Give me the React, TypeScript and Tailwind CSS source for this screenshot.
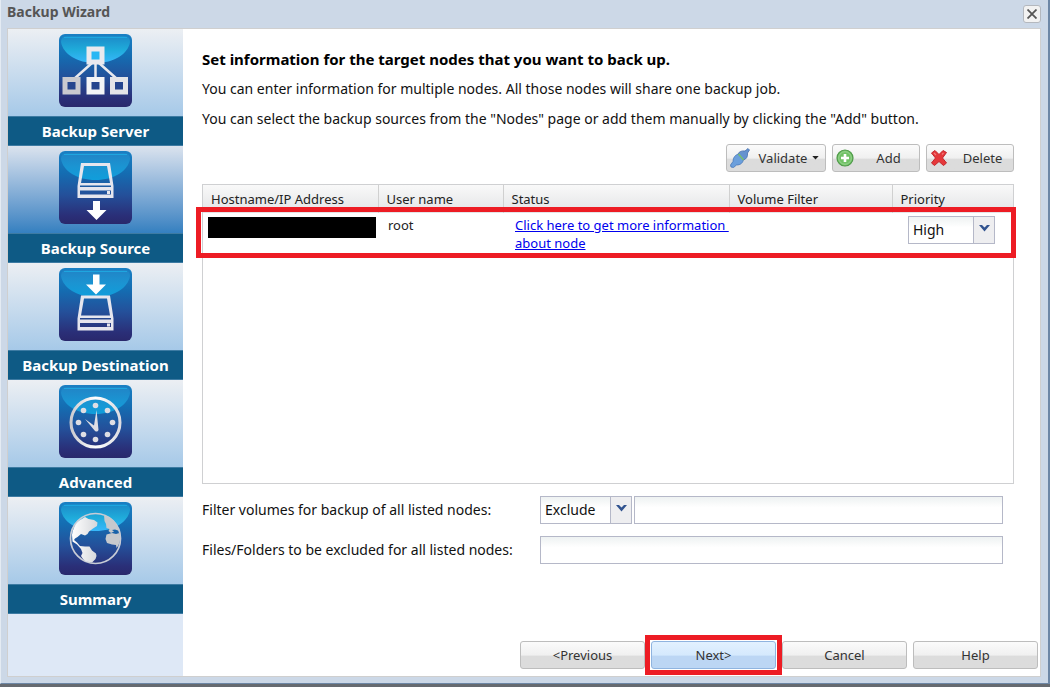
import React from 'react'

interface IStep {
  title: string
  active?: boolean
  icon: React.ReactNode
}

const Tile: React.FC<{ bright?: boolean; children: React.ReactNode }> = ({
  bright,
  children,
}) => (
  <svg viewBox="0 0 73 73" className="size-[73px]" aria-hidden="true">
    <defs>
      <linearGradient id="tile" x1="0" y1="0" x2="0" y2="1">
        <stop offset="0" stopColor="#1a80c4" />
        <stop offset="0.3" stopColor="#146db2" />
        <stop offset="0.6" stopColor="#24509a" />
        <stop offset="0.88" stopColor="#2a2f78" />
        <stop offset="1" stopColor="#29286c" />
      </linearGradient>
      <linearGradient id="gloss" x1="0" y1="0" x2="0" y2="1">
        <stop offset="0" stopColor="#2184c6" />
        <stop offset="0.5" stopColor="#1b94d2" />
        <stop offset="1" stopColor="#109edb" />
      </linearGradient>
      <linearGradient id="brightGloss" x1="0" y1="0" x2="0" y2="1">
        <stop offset="0" stopColor="#1c8ac8" />
        <stop offset="0.5" stopColor="#1fabda" />
        <stop offset="1" stopColor="#38b8fb" />
      </linearGradient>
      <linearGradient id="metal" x1="0" y1="0" x2="1" y2="0">
        <stop offset="0" stopColor="#cbcbd0" />
        <stop offset="0.5" stopColor="#ffffff" />
        <stop offset="1" stopColor="#dcdce2" />
      </linearGradient>
      <linearGradient id="land" x1="0" y1="0" x2="1" y2="0">
        <stop offset="0" stopColor="#ffffff" />
        <stop offset="1" stopColor="#d5d7db" />
      </linearGradient>
    </defs>
    <rect width="73" height="73" rx="6" fill="url(#tile)" />
    <path
      d="M2 8Q2 2 8 2H65Q71 2 71 8C69 20 55 29 36.500 29S4 20 2 8Z"
      fill={bright ? 'url(#brightGloss)' : 'url(#gloss)'}
    />
    <path d="M5 3.500H68" stroke="#1ea6e0" strokeWidth="1" />
    {children}
  </svg>
)

const Drive: React.FC = () => (
  <g>
    <path
      fillRule="evenodd"
      d="M22 12H51L54.500 35V47H18.500V35ZM25 15L22 32H51L48 15ZM21 34.500V36H52V34.500ZM21 39.500V43.500H52V39.500Z"
      fill="#e6e6ee"
    />
    <rect x="48" y="40" width="3" height="3" fill="#e6e6ee" />
  </g>
)

const ServerIcon: React.FC = () => (
  <Tile bright>
    <g fill="none" stroke="#e9e9ee">
      <path d="M33 29L15 45M36.500 29V45M40 29L58 45" strokeWidth="2.500" />
      <g strokeWidth="5">
        <rect x="30" y="15" width="13" height="13" fill="#28b7f4" />
        <rect x="6" y="45.500" width="13" height="12.500" fill="#25458e" stroke="#c9c9cf" />
        <rect x="30" y="45.500" width="13" height="12.500" fill="#25458e" stroke="#f4f4f6" />
        <rect x="53.500" y="45.500" width="13" height="12.500" fill="#25458e" stroke="#e4e4e8" />
      </g>
    </g>
  </Tile>
)

const SourceIcon: React.FC = () => (
  <Tile>
    <Drive />
    <path d="M34 50H41V59H47.500L37.500 69L27.500 59H34Z" fill="#fff" />
  </Tile>
)

const DestinationIcon: React.FC = () => (
  <Tile>
    <path d="M34 6.500H40.500V16.500H47L37 26.500L27 16.500H34Z" fill="#fff" />
    <g transform="translate(0 15.500)">
      <Drive />
    </g>
  </Tile>
)

const ClockIcon: React.FC = () => (
  <Tile>
    <circle cx="36.500" cy="37.500" r="24.500" fill="none" stroke="url(#metal)" strokeWidth="3" />
    <g fill="#dedee4">
      <circle cx="36.500" cy="20.500" r="2.800" />
      <circle cx="48.500" cy="25.500" r="2.800" />
      <circle cx="53.500" cy="37.500" r="2.800" />
      <circle cx="48.500" cy="49.500" r="2.800" />
      <circle cx="36.500" cy="54.500" r="2.800" />
      <circle cx="24.500" cy="49.500" r="2.800" />
      <circle cx="19.500" cy="37.500" r="2.800" />
      <circle cx="24.500" cy="25.500" r="2.800" />
      <path d="M37.500 25L39.500 45Q38.500 47.500 36 46L26 34L35 40.500Z" />
    </g>
  </Tile>
)

const GlobeIcon: React.FC = () => (
  <Tile bright>
    <circle cx="36.500" cy="36.500" r="25" fill="none" stroke="#c8ccd6" strokeWidth="1.700" />
    <path
      d="M13 33C14 26 17 21 20.500 18.500L26 15L29.500 17L35 18L38.500 20.500L38 24L34 26.500L30 29.500L28.500 32L26 33.500L22 32L18.500 35L16 36.500L15 38L18 40.500L21 44L26 44.500L30.500 44.500L33 48.500L37 51.500L37.500 54L36.500 57L33 60.500L27 59.500L24 57L22 54L23.500 51L22 47L18 42.500L13.500 39.500Z"
      fill="url(#land)"
    />
    <path
      d="M45 13C52 15 57.500 20 60.500 29L56 27.500L53 28L55 29.500L52 31L49.500 29L50.500 27L47.500 26L47 22L45.500 19ZM47.500 32.500L53 31L57 32L60.500 31C62 36 61 42 57.500 46L57 43L53 42.500L48 41L46.500 37Z"
      fill="#c7c9cd"
    />
  </Tile>
)

const steps: IStep[] = [
  { title: 'Backup Server', icon: <ServerIcon /> },
  { title: 'Backup Source', icon: <SourceIcon />, active: true },
  { title: 'Backup Destination', icon: <DestinationIcon /> },
  { title: 'Advanced', icon: <ClockIcon /> },
  { title: 'Summary', icon: <GlobeIcon /> },
]

const Step: React.FC<IStep> = ({ title, active, icon }) => (
  <li>
    <button type="button" className="block w-full">
      <span
        className={`flex h-[87px] justify-center bg-linear-to-b pt-[5px] ${
          active ? 'from-[#dbe3ee] to-[#3480c0]' : 'from-[#eceff3] to-[#a6c9e8]'
        }`}
      >
        {icon}
      </span>
      <span className="block h-[30px] border-y border-[#3d7ba3] bg-[#0e5a85] text-[15px] leading-7 font-bold text-white">
        {title}
      </span>
    </button>
  </li>
)

const ValidateIcon: React.FC = () => (
  <svg viewBox="0 0 20 20" className="size-5 shrink-0" aria-hidden="true">
    <path
      d="M1 19L0.500 17L3 13.500C3 9.500 5 7 8.500 6L13.500 11C13 15 10.500 17 6.500 17L3.500 19.500Z"
      fill="#6b9fdc"
      stroke="#4a78b8"
      strokeWidth="0.800"
    />
    <path
      d="M8 6C9 3.500 12 2.500 15 3L18 0.500L19.500 2L17.500 5C18 8.500 16.500 11 13.500 12Z"
      fill="#6592cf"
      stroke="#456fae"
      strokeWidth="0.800"
    />
    <path d="M8.500 6L13.500 12" stroke="#7ac16c" strokeWidth="1.400" />
  </svg>
)

const AddIcon: React.FC = () => (
  <svg viewBox="0 0 18 18" className="size-[18px] shrink-0" aria-hidden="true">
    <circle cx="9" cy="9" r="8" fill="#72c267" stroke="#4f9a49" strokeWidth="1.200" />
    <circle cx="9" cy="9" r="6.300" fill="none" stroke="#a2d99a" strokeWidth="0.800" />
    <path d="M9 5V13M5 9H13" stroke="#fff" strokeWidth="2.600" />
  </svg>
)

const DeleteIcon: React.FC = () => (
  <svg viewBox="0 0 18 18" className="size-[18px] shrink-0" aria-hidden="true">
    <path
      d="M1.500 4L5 1.500L9 5.500L13 1.500L16.500 3.500L12.500 9L16.500 14L13.500 16.500L9 12.500L4.500 16.500L1.500 14L5.500 9Z"
      fill="#e5383b"
      stroke="#c4262b"
      strokeLinejoin="round"
    />
    <path d="M4 4L6 6M13.500 4L12 5.500" stroke="#f27a7a" strokeWidth="1.200" />
  </svg>
)

const buttonLook =
  'flex h-7 items-center rounded-[3px] border border-[#bdbdbd] bg-linear-to-b from-[#fbfbfb] from-0% via-[#f0f0f0] via-50% to-[#dcdcdc] to-55% text-[13px] text-[#333]'

const ToolButton: React.FC<{
  label: string
  icon: React.ReactNode
  menu?: boolean
}> = ({ label, icon, menu }) => (
  <button
    type="button"
    className={`${buttonLook} ${menu ? 'w-[100px]' : 'w-[88px]'} pl-[3px]`}
  >
    {icon}
    <span className="flex-1 pl-1 text-center">{label}</span>
    {menu ? (
      <svg viewBox="0 0 8 5" className="mr-1.5 h-1 w-[7px]" aria-hidden="true">
        <path d="M0 0H8L4 4.500Z" fill="#222" />
      </svg>
    ) : null}
  </button>
)

const Dropdown: React.FC<{
  label: string
  options: string[]
  width: string
}> = ({ label, options, width }) => (
  <div className={`relative h-7 shrink-0 ${width}`}>
    <select
      aria-label={label}
      className="h-full w-full appearance-none border border-[#b5b8c8] bg-linear-to-b from-[#eef2f2] to-white to-40% pl-1 text-sm text-[#111]"
    >
      {options.map((option) => (
        <option key={option}>{option}</option>
      ))}
    </select>
    <span className="pointer-events-none absolute inset-y-0 right-0 flex w-[22px] items-center justify-center border border-[#b5b8c8] bg-[#eeeef0]">
      <svg viewBox="0 0 11 7" className="mb-1 h-[7px] w-[11px]" aria-hidden="true">
        <path d="M0 0H3L5.500 2.500L8 0H11L5.500 6.500Z" fill="#31538f" />
      </svg>
    </span>
  </div>
)

const headCell = 'h-7 px-2 text-left font-normal'

const NodeTable: React.FC = () => (
  <div className="relative mt-3 min-h-[300px] flex-1 border border-[#cfd0d2]">
    <table className="w-full table-fixed border-collapse text-[13px] text-[#222]">
      <colgroup>
        <col className="w-[175px]" />
        <col className="w-[125px]" />
        <col />
        <col className="w-[163px]" />
        <col className="w-[121px]" />
      </colgroup>
      <thead className="bg-linear-to-b from-[#f9f9f9] to-[#e3e4e6]">
        <tr className="divide-x divide-[#d0d0d0]">
          <th className={headCell}>Hostname/IP Address</th>
          <th className={headCell}>User name</th>
          <th className={headCell}>Status</th>
          <th className={headCell}>Volume Filter</th>
          <th className={headCell}>Priority</th>
        </tr>
      </thead>
      <tbody>
        <tr className="align-top">
          <td className="pt-1 pr-0.5 pl-[5px]">
            <div className="h-[21px] bg-black" />
          </td>
          <td className="pt-[3px] pl-2.5 leading-[18px]">root</td>
          <td className="pt-[3px] pl-3 leading-[18px]">
            <a href="#node" className="whitespace-nowrap text-[#0000ee] underline">
              Click here to get more information&nbsp;
              <br />
              about node
            </a>
          </td>
          <td />
          <td className="pt-[3px] pl-4">
            <Dropdown
              label="Priority"
              options={['High', 'Medium', 'Low']}
              width="w-[87px]"
            />
          </td>
        </tr>
      </tbody>
    </table>
    <div className="pointer-events-none absolute top-[22px] -right-[3px] -left-[7px] h-[51px] border-5 border-[#ed1c24]" />
  </div>
)

const inputLook =
  'h-7 min-w-0 flex-1 border border-[#b5b8c8] bg-linear-to-b from-[#eef2f2] to-white to-40% px-1 text-sm'

const footerButton = `${buttonLook} w-[125px] justify-center`

const App: React.FC = () => {
  return (
    <div className="flex min-h-screen flex-col border-b-3 border-[#666a70] bg-[#ccd8e7] font-['Noto_Sans','Open_Sans',sans-serif]">
      <div className="flex flex-1 flex-col border-r-2 border-b border-l border-[#6d87a6] border-l-[#e4ebf3] pr-[7px] pb-1.5 pl-1.5">
        <header className="flex h-7 items-center justify-between">
          <h1 className="pb-1 text-sm font-bold text-[#555]">Backup Wizard</h1>
          <button
            type="button"
            aria-label="Close"
            className="flex size-[18px] items-center justify-center rounded-[3px] border border-[#b4b8be] bg-[#f2f2f2]"
          >
            <svg viewBox="0 0 10 10" className="size-2.5" aria-hidden="true">
              <path d="M0.500 0.500L9.500 9.500M9.500 0.500L0.500 9.500" stroke="#555" strokeWidth="1.800" />
            </svg>
          </button>
        </header>
        <div className="flex flex-1 border border-[#cfcfcf] bg-white">
          <nav className="w-[175px] shrink-0 bg-[#dee8f6]">
            <ol>
              {steps.map((step) => (
                <Step key={step.title} {...step} />
              ))}
            </ol>
          </nav>
          <main className="flex min-w-0 flex-1 flex-col pt-[15px] pb-[7px] pl-[19px] text-sm text-[#111]">
            <div className="mr-[26px] flex flex-1 flex-col">
              <h2 className="text-[15px] leading-[30px] font-bold text-black">
                Set information for the target nodes that you want to back up.
              </h2>
              <p className="leading-[30px]">
                You can enter information for multiple nodes. All those nodes
                will share one backup job.
              </p>
              <p className="leading-[30px]">
                You can select the backup sources from the "Nodes" page or add
                them manually by clicking the "Add" button.
              </p>
              <div className="mt-2.5 flex justify-end gap-1.5">
                <ToolButton label="Validate" icon={<ValidateIcon />} menu />
                <ToolButton label="Add" icon={<AddIcon />} />
                <ToolButton label="Delete" icon={<DeleteIcon />} />
              </div>
              <NodeTable />
              <div className="mt-3 mr-[11px] flex items-center">
                <label htmlFor="volumes" className="w-[338px] shrink-0">
                  Filter volumes for backup of all listed nodes:
                </label>
                <div className="flex min-w-0 flex-1 gap-0.5">
                  <Dropdown
                    label="Filter mode"
                    options={['Exclude', 'Include']}
                    width="w-[92px]"
                  />
                  <input id="volumes" type="text" className={inputLook} />
                </div>
              </div>
              <div className="mt-3 mr-[11px] flex items-center">
                <label htmlFor="files" className="w-[338px] shrink-0">
                  Files/Folders to be excluded for all listed nodes:
                </label>
                <input id="files" type="text" className={inputLook} />
              </div>
            </div>
            <footer className="mt-[77px] mr-0.5 flex justify-end gap-1.5">
              <button type="button" className={footerButton}>
                &lt;Previous
              </button>
              <div className="relative">
                <button
                  type="button"
                  className="flex h-7 w-[125px] items-center justify-center rounded-[3px] border border-[#8fb4e0] bg-linear-to-b from-[#e2f1ff] from-0% via-[#d5e9fd] via-50% to-[#bcd6f4] to-55% text-[13px] text-[#333]"
                >
                  Next&gt;
                </button>
                <span className="pointer-events-none absolute -inset-1.5 border-5 border-[#ed1c24]" />
              </div>
              <button type="button" className={footerButton}>
                Cancel
              </button>
              <button type="button" className={footerButton}>
                Help
              </button>
            </footer>
          </main>
        </div>
      </div>
    </div>
  )
}

export default App
